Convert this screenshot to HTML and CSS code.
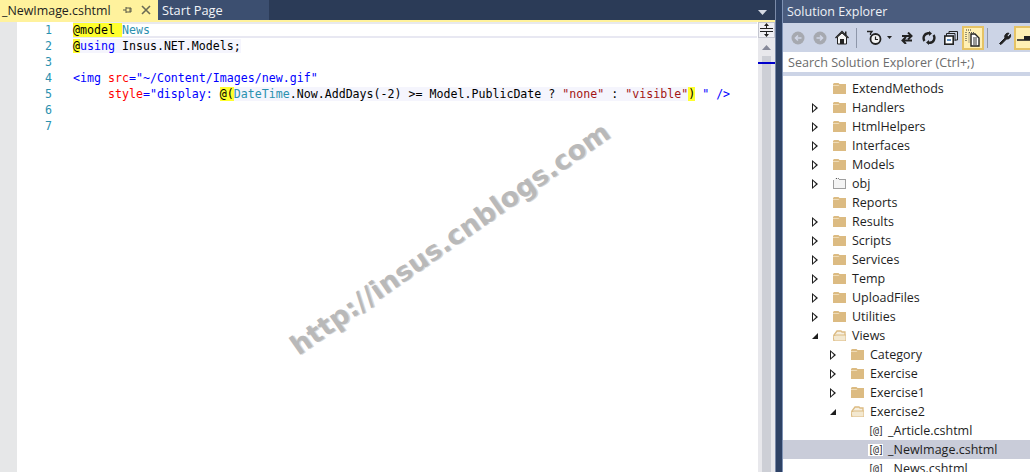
FILE: index.html
```html
<!DOCTYPE html>
<html lang="en">
<head>
<meta charset="utf-8">
<title>Solution Explorer</title>
<link rel="stylesheet" href="styles.css">
</head>
<body>
<div class="app">
  <main class="editor">
    <div class="tabs">
      <div class="tab active">
        <span class="tab-name">_NewImage.cshtml</span>
        <svg class="pin" width="10" height="10" viewBox="0 0 10 10"><path d="M0 5H3M3 2V8M3 3H8V7H3M7 3V7" fill="none" stroke="#5a5a48"/></svg>
        <svg class="close" width="10" height="10" viewBox="0 0 10 10"><path d="M1 1L9 9M9 1L1 9" stroke="#6b6b55" stroke-width="1.6"/></svg>
      </div>
      <div class="tab other">Start Page</div>
      <svg class="overflow" width="9" height="5" viewBox="0 0 9 5"><path d="M0 0H9L4.5 5Z" fill="#d5dae4"/></svg>
    </div>
    <div class="rule"></div>
    <div class="body">
      <div class="gutter"></div>
      <div class="numbers"><div>1</div><div>2</div><div>3</div><div>4</div><div>5</div><div>6</div><div>7</div></div>
      <div class="code">
        <div class="line current"><span class="hl">@<span class="kw">model</span> </span><span class="ty">News</span></div>
        <div class="line"><span class="tint"><span class="hl">@</span><span class="bl">using</span> Insus.NET.Models;</span></div>
        <div class="line"></div>
        <div class="line"><span class="bl">&lt;img</span> <span class="re">src</span><span class="bl">="~/Content/Images/new.gif"</span></div>
        <div class="line">     <span class="re">style</span><span class="bl">="display:</span> <span class="tint"><span class="hl">@(</span><span class="ty">DateTime</span>.Now.AddDays(-2) &gt;= Model.PublicDate ? <span class="str">"none"</span> : <span class="str">"visible"</span></span><span class="hl">)</span> <span class="bl">"</span> <span class="bl">/&gt;</span></div>
        <div class="line"></div>
        <div class="line"></div>
      </div>
      <div class="vscroll">
        <div class="split">
          <svg width="15" height="14" viewBox="0 0 15 14"><path d="M1 5.5H14M1 8.5H14" stroke="#222"/><path d="M7.5 0L5 3H10ZM7.5 14L5 11H10Z" fill="#222"/><path d="M7.5 2V5M7.5 9V12" stroke="#222"/></svg>
        </div>
        <div class="sb-up"><svg width="9" height="5" viewBox="0 0 9 5"><path d="M4.5 0L9 5H0Z" fill="#868999"/></svg></div>
        <div class="sb-track"><div class="sb-mark"></div></div>
      </div>
    </div>
    <div class="watermark">http://insus.cnblogs.com</div>
  </main>
  <aside class="explorer">
    <header class="title">Solution Explorer</header>
    <div class="toolbar">
      <svg class="t" width="14" height="14" viewBox="0 0 14 14"><circle cx="7" cy="7" r="6.5" fill="#a6a9b0"/><path d="M10.5 7H4.5M7 4.5L4.5 7L7 9.5" fill="none" stroke="#d0d6e6" stroke-width="1.6"/></svg>
      <svg class="t" width="14" height="14" viewBox="0 0 14 14"><circle cx="7" cy="7" r="6.5" fill="#a6a9b0"/><path d="M3.5 7H9.5M7 4.5L9.5 7L7 9.5" fill="none" stroke="#d0d6e6" stroke-width="1.6"/></svg>
      <svg class="t home" width="14" height="15" viewBox="0 0 14 15"><path d="M.5 8L7 1.5L13.5 8" fill="none" stroke="#222" stroke-width="1.4"/><path d="M2.5 7V14H11.5V7L7 3Z" fill="#f4f4f4" stroke="#222"/><rect x="5" y="9" width="4" height="5" fill="#222"/><rect x="10" y="1.5" width="1.5" height="4" fill="#222"/></svg>
      <span class="sep"></span>
      <svg class="t hist" width="15" height="15" viewBox="0 0 15 15"><circle cx="8.5" cy="9" r="5" fill="#f4f4f4" stroke="#222" stroke-width="1.8"/><path d="M8.5 6.5V9.5H11" fill="none" stroke="#222" stroke-width="1.2"/><path d="M0 1.5H5L3.5 3.5V5" fill="none" stroke="#222" stroke-width="1.3"/></svg>
      <svg class="caret" width="5" height="3" viewBox="0 0 5 3"><path d="M0 0H5L2.5 3Z" fill="#222"/></svg>
      <svg class="t" width="14" height="12" viewBox="0 0 14 12"><path d="M2 4H11M8 .5L11.5 4L8 7.5" fill="none" stroke="#222" stroke-width="2"/><path d="M12 8.5H3M6 5L2.5 8.5L6 12" fill="none" stroke="#222" stroke-width="2"/></svg>
      <svg class="t" width="14" height="14" viewBox="0 0 14 14"><path d="M2.5 10A5 5 0 0 1 6 2.2H8M11.5 4A5 5 0 0 1 8 11.8H6" fill="none" stroke="#222" stroke-width="2.4"/><path d="M7 0V5L10 2.5ZM7 9V14L4 11.5Z" fill="#222"/></svg>
      <svg class="t col" width="14" height="14" viewBox="0 0 14 14"><path d="M5 3V.5H13.5V9H11" fill="none" stroke="#222"/><path d="M2.5 5V2.5H11V10" fill="none" stroke="#222"/><rect x=".8" y="5" width="8.4" height="8.2" fill="#fff" stroke="#222" stroke-width="1.6"/><path d="M3 9H7" stroke="#2a6ab0" stroke-width="1.5"/></svg>
      <span class="toggle">
        <svg width="16" height="18" viewBox="0 0 16 18"><path d="M1 1H2M3 1H4M5 1H6M1 3V4M1 5V6M1 7V8M1 9V10M1 11V12" stroke="#333"/><path d="M4 3.5H9M4 3.5V14" stroke="#555" stroke-dasharray="1 1"/><path d="M6 5H10L14 9V17H6Z" fill="#fff" stroke="#222" stroke-width="1.4"/><path d="M8 9H12M8 11H12M8 13H12M8 15H12" stroke="#333"/></svg>
      </span>
      <span class="sep after-toggle"></span>
      <svg class="t wrench" width="14" height="14" viewBox="0 0 14 14"><path d="M1.5 12.5L7 7A3.5 3.5 0 0 1 11 2.2L9 4.5L10.5 5.8L12.5 3.5A3.5 3.5 0 0 1 8.5 8L3 13.5Z" fill="#222" stroke="#222"/></svg>
      <span class="toggle last">
        <svg width="16" height="8" viewBox="0 0 16 8"><path d="M0 6H16" stroke="#222" stroke-width="1.6"/><rect x="7" y="2" width="9" height="4" fill="#222"/></svg>
      </span>
    </div>
    <div class="search">Search Solution Explorer (Ctrl+;)</div>
    <div class="tree">
      <div class="row d1"><span class="arrow"></span><svg class="ico"><use href="#fold"/></svg><span>ExtendMethods</span></div>
      <div class="row d1"><span class="arrow closed"></span><svg class="ico"><use href="#fold"/></svg><span>Handlers</span></div>
      <div class="row d1"><span class="arrow closed"></span><svg class="ico"><use href="#fold"/></svg><span>HtmlHelpers</span></div>
      <div class="row d1"><span class="arrow closed"></span><svg class="ico"><use href="#fold"/></svg><span>Interfaces</span></div>
      <div class="row d1"><span class="arrow closed"></span><svg class="ico"><use href="#fold"/></svg><span>Models</span></div>
      <div class="row d1"><span class="arrow closed"></span><svg class="ico"><use href="#ghost"/></svg><span>obj</span></div>
      <div class="row d1"><span class="arrow"></span><svg class="ico"><use href="#fold"/></svg><span>Reports</span></div>
      <div class="row d1"><span class="arrow closed"></span><svg class="ico"><use href="#fold"/></svg><span>Results</span></div>
      <div class="row d1"><span class="arrow closed"></span><svg class="ico"><use href="#fold"/></svg><span>Scripts</span></div>
      <div class="row d1"><span class="arrow closed"></span><svg class="ico"><use href="#fold"/></svg><span>Services</span></div>
      <div class="row d1"><span class="arrow closed"></span><svg class="ico"><use href="#fold"/></svg><span>Temp</span></div>
      <div class="row d1"><span class="arrow closed"></span><svg class="ico"><use href="#fold"/></svg><span>UploadFiles</span></div>
      <div class="row d1"><span class="arrow closed"></span><svg class="ico"><use href="#fold"/></svg><span>Utilities</span></div>
      <div class="row d1"><span class="arrow open"></span><svg class="ico"><use href="#open"/></svg><span>Views</span></div>
      <div class="row d2"><span class="arrow closed"></span><svg class="ico"><use href="#fold"/></svg><span>Category</span></div>
      <div class="row d2"><span class="arrow closed"></span><svg class="ico"><use href="#fold"/></svg><span>Exercise</span></div>
      <div class="row d2"><span class="arrow closed"></span><svg class="ico"><use href="#fold"/></svg><span>Exercise1</span></div>
      <div class="row d2"><span class="arrow open"></span><svg class="ico"><use href="#open"/></svg><span>Exercise2</span></div>
      <div class="row d3"><span class="at">[@]</span><span>_Article.cshtml</span></div>
      <div class="row d3 selected"><span class="at">[@]</span><span>_NewImage.cshtml</span></div>
      <div class="row d3"><span class="at">[@]</span><span>_News.cshtml</span></div>
    </div>
  </aside>
</div>
<svg class="defs" width="0" height="0">
  <symbol id="fold" viewBox="0 0 13 11"><path d="M0 1L1 0H5.5L6.5 1H13V11H0Z" fill="#dcbb82"/><path d="M0 2H6.5L5.5 3H0Z" fill="#efdcb8"/></symbol>
  <symbol id="open" viewBox="0 0 13 11"><path d="M1 5L4 1H8L9 2H12V10H1Z" fill="#f6efe0" stroke="#dcbb82" stroke-width="1.3"/><path d="M0 6L3 5H13V11H1Z" fill="#f3e8d0" stroke="#dcbb82"/></symbol>
  <symbol id="ghost" viewBox="0 0 13 11"><path d="M.5 2.5V10.5H12.5V1.5H6.5L5.5 .5H2" fill="#f4f4f4" stroke="#444" stroke-dasharray="1 1"/></symbol>
</svg>
</body>
</html>
```
FILE: styles.css
```css
* { box-sizing: border-box; }
html, body { margin: 0; height: 100%; overflow: hidden; background: #fff; }
.app { display: flex; height: 472px; width: 1030px; background: #2e4265; }
.defs { position: absolute; }

.editor { position: relative; width: 776px; display: flex; flex-direction: column; background: #fff; overflow: hidden; border-right: 1px solid #7a8aa8; }
.tabs { height: 20px; background: #2b3b57; display: flex; align-items: stretch; position: relative; flex: none; }
.tab { display: flex; align-items: center; font: 12.8px "Open Sans", "Noto Sans", sans-serif; }
.tab.active { width: 158px; background: #fff29d; color: #1e1e1e; padding-left: 2px; }
.tab-name { width: 120px; white-space: nowrap; font-size: 12.4px; }
.pin { margin-left: 1px; }
.close { margin-left: 8px; }
.tab.other { width: 111px; background: #3c4f70; color: #f2f4f8; padding-left: 4px; }
.overflow { margin: 10px 8px 0 auto; }
.rule { height: 2px; background: #fff29d; flex: none; }

.body { flex: 1; display: flex; min-height: 0; }
.gutter { width: 17px; background: #e6e7e8; flex: none; }
.numbers { width: 36px; flex: none; text-align: right; color: #2b91af; font: 11.62px/16px "DejaVu Sans Mono", monospace; padding-right: 1px; }
.code { flex: 1; margin-left: 20px; font: 11.62px/16px "DejaVu Sans Mono", "Liberation Mono", monospace; color: #000; min-width: 0; }
.line { height: 16px; white-space: pre; }
.line.current { margin-right: 1px; border-top: 2px solid #e8e9ee; border-bottom: 2px solid #e8e8f2; line-height: 12px; }
.hl { background: #ffff2d; }
.kw { color: #000; }
.bl { color: #0000ff; }
.re { color: #ff0000; }
.ty { color: #2b91af; }
.str { color: #a31515; }
.tint { background: #f5f5fd; }

.vscroll { width: 17px; background: #e8e8ec; display: flex; flex-direction: column; flex: none; }
.split { height: 16px; background: #f0f0f4; border: 1px solid #c4c6d0; display: flex; align-items: center; justify-content: center; flex: none; }
.split svg { display: block; }
.sb-up { height: 18px; display: flex; align-items: center; justify-content: center; flex: none; }
.sb-track { flex: 1; margin: 0 4px; background: #cdcfd6; position: relative; }
.sb-mark { position: absolute; left: -4px; right: -4px; top: 6px; height: 2px; background: #0000cc; }

.watermark { position: absolute; left: 250px; top: 223px; width: 400px; text-align: center; white-space: nowrap; font: 700 27px "DejaVu Sans", sans-serif; letter-spacing: .3px; color: #b9b9b9; text-shadow: 1px 1px 0 #d8d8d8; transform: rotate(-35deg); }

.explorer { margin-left: 6px; width: 248px; border-left: 1px solid #7f93b5; display: flex; flex-direction: column; background: #fff; }
.title { height: 23px; background: #4a5c7e; color: #eef1f6; font: 12.5px/23px "Open Sans", "Noto Sans", sans-serif; padding-left: 4px; white-space: nowrap; flex: none; }
.toolbar { height: 29px; background: #ccd4e6; display: flex; align-items: center; padding-left: 8px; overflow: hidden; flex: none; }
.t { flex: none; margin-right: 8px; }
.t.home { margin-right: 7px; }
.t.hist { margin-right: 5px; }
.t.col { margin-right: 4px; }
.t.wrench { margin-right: 2px; }
.sep { width: 1px; height: 20px; background: #8e97aa; margin-right: 10px; flex: none; }
.sep.after-toggle { margin-left: 3px; }
.caret { flex: none; margin-right: 8px; }
.toggle { flex: none; width: 22px; height: 24px; background: #fff0b4; border: 2px solid #e5c365; display: flex; align-items: center; justify-content: center; }
.toggle.last { width: 26px; justify-content: flex-start; padding-left: 1px; }
.search { height: 24px; background: #fff; border-bottom: 4px solid #ccd4e6; font: 12.6px/21px "Open Sans", "Noto Sans", sans-serif; color: #6d6d6d; padding-left: 5px; white-space: nowrap; flex: none; }

.tree { flex: 1; overflow: hidden; padding-top: 3px; font: 12.5px/19px "Open Sans", "Noto Sans", sans-serif; color: #1e1e1e; }
.row { height: 19px; display: flex; align-items: center; white-space: nowrap; }
.row.selected { background: #c9ccd9; }
.row.d1 { padding-left: 29px; }
.row.d2 { padding-left: 47px; }
.row.d3 { padding-left: 85px; }
.arrow { width: 6px; height: 10px; flex: none; margin-right: 15px; position: relative; }
.arrow.closed::before { content: ""; position: absolute; left: 0; top: 0; border-left: 6px solid #1e1e1e; border-top: 5px solid transparent; border-bottom: 5px solid transparent; }
.arrow.closed::after { content: ""; position: absolute; left: 1px; top: 2px; border-left: 3px solid #fff; border-top: 3px solid transparent; border-bottom: 3px solid transparent; }
.arrow.open::before { content: ""; position: absolute; left: 0; top: 2px; border-bottom: 6px solid #1e1e1e; border-left: 6px solid transparent; }
.ico { width: 13px; height: 11px; flex: none; margin-right: 6px; }
.at { width: 15px; flex: none; margin-right: 5px; font: 10px/12px "DejaVu Sans Mono", monospace; color: #333; letter-spacing: -1px; background: #fff; white-space: nowrap; }
```
